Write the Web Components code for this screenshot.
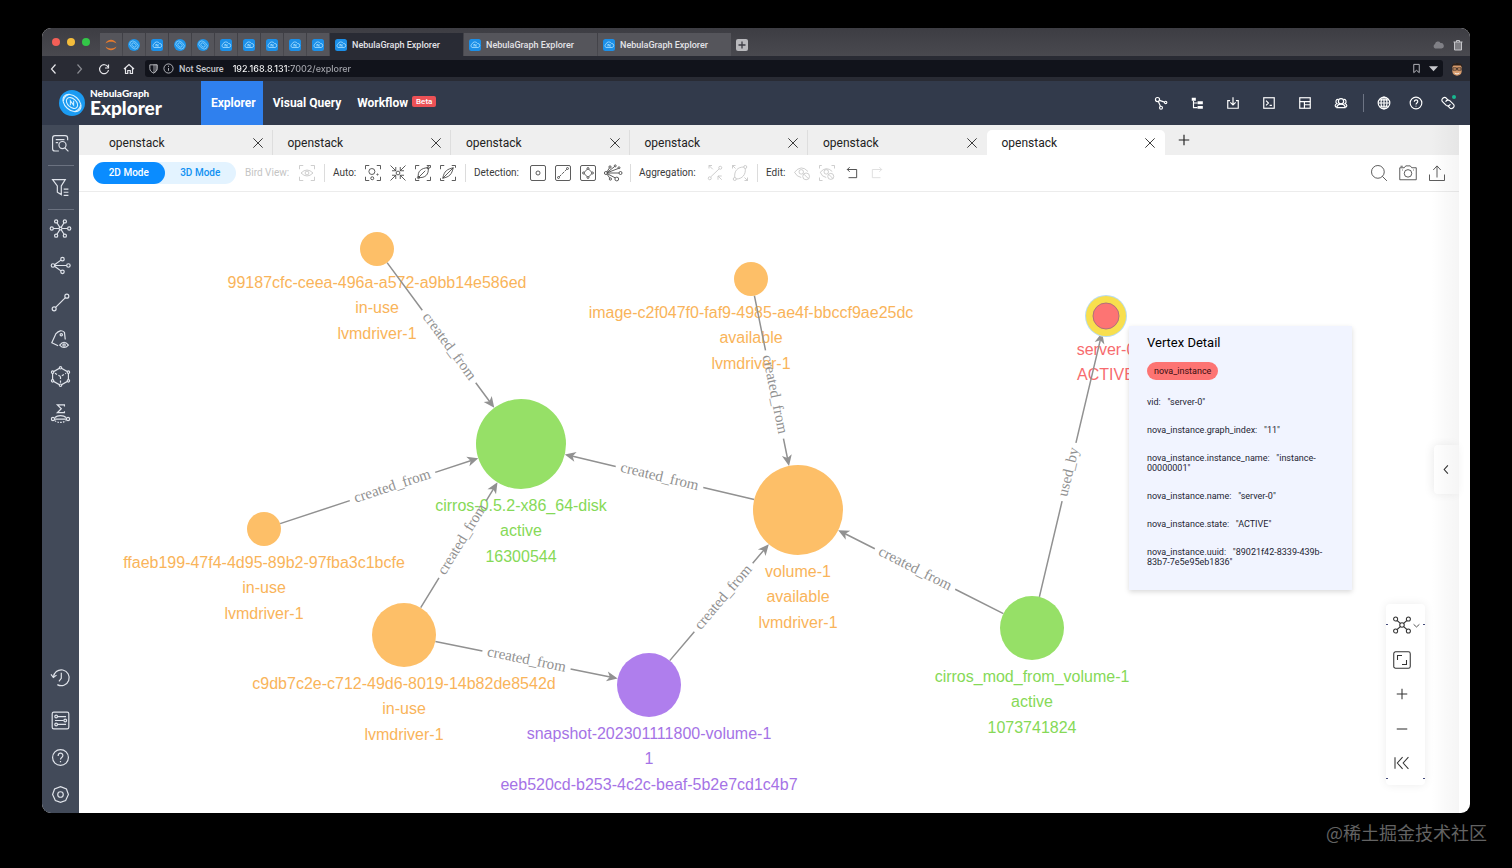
<!DOCTYPE html>
<html lang="en">
<head>
<meta charset="utf-8">
<title>NebulaGraph Explorer</title>
<style>
html { background: #000; }
body { margin: 0; min-height: 100vh; display: flex; flex-direction: column; background: #000; font-family: Roboto, "Liberation Sans", sans-serif; }
</style>
</head>
<body>
<app-window></app-window>
<page-credit>@稀土掘金技术社区</page-credit>

<script>
const ICONS = {
  close: '<path d="M4 4L20 20M20 4L4 20"/>',
  plus: '<path d="M12 3V21M3 12H21"/>',
  minus: '<path d="M3 12H21"/>',
  back: '<path d="M15 3L7 12L15 21"/>',
  forward: '<path d="M9 3L17 12L9 21"/>',
  reload: '<path d="M20 8A9 9 0 1 0 21 14"/><path d="M21 3V10H14" />',
  home: '<path d="M2 12L12 3L22 12M5 10V21H9.5V15H14.500V21H19V10"/>',
  shield: '<path d="M4 4H20V12C20 17 16 20 12 22C8 20 4 17 4 12Z"/><path d="M12 4H20V12C20 17 16 20 12 22Z" fill="currentColor" opacity=".4"/>',
  info: '<circle cx="12" cy="12" r="10"/><path d="M12 11V17M12 6V8.500"/>',
  bookmark: '<path d="M6 3H18V21L12 16L6 21Z"/>',
  caret: '<path d="M2 7H22L12 18Z" fill="currentColor" stroke="none"/>',
  cloud: '<path d="M6 19A5 5 0 0 1 6 10A6 6 0 0 1 17 8A5 5 0 0 1 19 19Z" fill="currentColor" stroke="none"/>',
  trash: '<path d="M3 6H21M9 6V3H15V6M5 6V22H19V6"/><path d="M6 7H18V21H6Z" fill="currentColor" opacity=".45"/>',
  addTab: '<rect x="0" y="0" width="24" height="24" rx="4" fill="#b9b9bd" stroke="none"/><path d="M12 5V19M5 12H19" stroke="#3c3c44"/>',
  jupyter: '<path d="M1 9C5 -1 19 -1 23 9C17 4 7 4 1 9ZM1 15C5 25 19 25 23 15C17 20 7 20 1 15Z" fill="#e27a2f" stroke="none"/>',
  favRound: '<circle cx="12" cy="12" r="12" fill="#1d94ea" stroke="none"/><g stroke="#a9e0ff" stroke-width="1.2"><ellipse cx="12" cy="12" rx="9.500" ry="6.500" transform="rotate(40 12 12)"/><ellipse cx="12" cy="12" rx="5" ry="3.500" transform="rotate(40 12 12)"/></g>',
  favSquare: '<rect width="24" height="24" rx="5" fill="#1b8fe8" stroke="none"/><g stroke="#a9e0ff"><path d="M6 17A4 4 0 0 1 6 10A6 6 0 0 1 17 9A4 4 0 0 1 18 17Z"/><path d="M10 15V10L14 15V10"/></g>',
  avatar: '<path d="M4 8C4 0 20 0 20 8V16C20 26 4 26 4 16Z" fill="#d69a6c" stroke="none"/><path d="M3 9C2 0 22 -1 21 9L18 6H6Z" fill="#2b211c" stroke="none"/><path d="M5 10H11V14H5ZM13 10H19V14H13ZM11 11H13" stroke="#2a2220" stroke-width="1.2"/><path d="M8 19Q12 22 16 19" stroke="#fff"/>',
  logo: '<circle cx="12" cy="12" r="12" fill="#1b9bf2" stroke="none"/><g stroke="#d8f1ff"><ellipse cx="12" cy="12" rx="9.500" ry="6.500" transform="rotate(42 12 12)"/><ellipse cx="12" cy="12" rx="6" ry="4" transform="rotate(42 12 12)"/><path d="M10.500 14V10L13.500 14V10M4 10A8 8 0 0 1 10 4M20 14A8 8 0 0 1 14 20"/></g>',
  navGraph: '<circle cx="6" cy="6" r="3.500"/><circle cx="20" cy="11" r="2"/><circle cx="12" cy="20" r="2.500"/><path d="M9.500 7.500L18 10.500M7.500 9.500L11 17.500"/>',
  navTree: '<path d="M3 3H10V8H3ZM13 9H22V14H13ZM13 17H22V22H13Z" fill="currentColor" stroke="none"/><path d="M6 8V20H13M6 12H13"/>',
  navImport: '<path d="M7 8H3V21H21V8H17M12 2V15M7.500 11L12 15.500L16.500 11"/>',
  navConsole: '<rect x="3" y="3" width="18" height="18"/><path d="M7 8L11 12L7 16M13 16H17"/>',
  navLayout: '<rect x="3" y="3" width="18" height="18"/><path d="M3 9.500H21M11 9.500V21M11 15H21"/>',
  navUsers: '<circle cx="12" cy="9" r="4.500"/><path d="M5 20C5 12 19 12 19 20ZM7.500 6C3 5 2 11 5 13C1 15 1 19 5 19M16.500 6C21 5 22 11 19 13C23 15 23 19 19 19"/>',
  globe: '<circle cx="12" cy="12" r="10"/><ellipse cx="12" cy="12" rx="5" ry="10"/><path d="M12 2V22M2 12H22M4 6.500H20M4 17.500H20"/>',
  help: '<circle cx="12" cy="12" r="10"/><path d="M9 10C9 5.500 15 5.500 15 9.500C15 12 12 12 12 14.500M12 16.500V18"/>',
  link: '<path d="M12 7L9 3.500C5.500 0 -1 6 2.500 9.500L9 16C11.500 18 15 17 16 14"/><path d="M12 17L15 20.500C18.500 24 25 18 21.500 14.500L15 8C12.500 6 9 7 8 10"/>',
  searchDoc: '<path d="M10 21.500H5Q2 21.500 2 18.500V5Q2 2 5 2H18Q21 2 21 5V8M6 7H17M6 11H9"/><circle cx="14.500" cy="14" r="4.500"/><path d="M17.500 17.500L22 22"/>',
  filter: '<path d="M2 2H18L13 10V21L8 18V10ZM16 14H22M16 18H22M16 22H22"/>',
  hub: '<circle cx="12" cy="12" r="1.800"/><circle cx="1" cy="12" r="2"/><circle cx="23" cy="12" r="2"/><circle cx="6.500" cy="3" r="2"/><circle cx="17.500" cy="3" r="2"/><circle cx="6.500" cy="21" r="2"/><circle cx="17.500" cy="21" r="2"/><path d="M3 12H10M14 12H21M7.500 4.800L11 10.300M16.500 4.800L13 10.300M7.500 19.200L11 13.700M16.500 19.200L13 13.700"/>',
  branch: '<circle cx="2.500" cy="12" r="2.200"/><circle cx="22" cy="12" r="2.200"/><circle cx="14.500" cy="4" r="2.200"/><circle cx="14.500" cy="20" r="2.200"/><path d="M4.700 12H19.800M4.500 11L12.500 5.200M4.500 13L12.500 18.800"/>',
  path: '<circle cx="4" cy="20" r="2.500"/><circle cx="20" cy="4" r="2.500"/><path d="M5.800 18.200L18.200 5.800"/>',
  tagEye: '<path d="M9 20L1 16L6 5Q12 -2 17 3L18 12"/><circle cx="13" cy="6" r="1.500"/><path d="M11 19Q16.500 12 22 19Q16.500 25 11 19Z"/><circle cx="16.500" cy="19" r="1.500"/>',
  cube: '<path d="M12 1L22 6.500V17.500L12 23L2 17.500V6.500Z"/><path d="M5 8L12 12L19 8M12 12V20" stroke-dasharray="3 2"/><g fill="#424a59"><circle cx="12" cy="1" r="1.500"/><circle cx="22" cy="6.500" r="1.500"/><circle cx="22" cy="17.500" r="1.500"/><circle cx="12" cy="23" r="1.500"/><circle cx="2" cy="17.500" r="1.500"/><circle cx="2" cy="6.500" r="1.500"/></g>',
  sigma: '<path d="M17 3V1H8L13 6L8 11H17V9"/><circle cx="2.500" cy="19" r="2"/><circle cx="21.500" cy="19" r="2"/><path d="M4.500 19H19.500M5 17C8 14 16 14 19 17"/><path d="M5 21C8 24 16 24 19 21" stroke-dasharray="2 1.500"/>',
  history: '<path d="M3 12A10 10 0 1 1 8 21"/><path d="M0 8L3 12L7 9M13 6V13L10 17"/>',
  list: '<rect x="1.500" y="1.500" width="21" height="21" rx="2"/><circle cx="6.500" cy="7" r="1.700"/><circle cx="18" cy="12" r="1.700"/><circle cx="6.500" cy="17" r="1.700"/><path d="M8.500 7H19M5 12H16M8.500 17H19"/>',
  gear: '<path d="M12 2L19.500 5L22 12L18.500 19.500L12 22L5.500 19.500L2 12L4.500 5Z"/><circle cx="12" cy="12" r="3.500"/>',
  eyeFrame: '<path d="M2 7V2H7M17 2H22V7M22 17V22H17M7 22H2V17M4 12Q12 4 20 12Q12 20 4 12Z"/><circle cx="12" cy="12" r="2.500"/>',
  autoCircles: '<path d="M2 7V2H7M17 2H22V7M22 17V22H17M7 22H2V17"/><circle cx="10.500" cy="10" r="4"/><circle cx="18" cy="14" r=".8"/><circle cx="11" cy="19" r="2"/>',
  converge: '<circle cx="12" cy="12" r="2.500"/><path d="M2 2L9 9M22 2L15 9M2 22L9 15M22 22L15 15M9 4V9H4M15 4V9H20M9 20V15H4M15 20V15H20"/>',
  leafA: '<path d="M2 7V2H7M17 2H22V5M22 17V22H17M2 19V22H7M6 18C4 10 10 5 19 5C20 14 15 19 6 18ZM6 18L15 9"/><circle cx="19" cy="5" r="1.500"/><circle cx="6" cy="18" r="1.500"/>',
  leafB: '<path d="M2 7V2H7M17 2H22V5M22 17V22H17M2 19V22H7M5 19C7 9 11 7 19 5C17 14 14 17 5 19ZM5 19L19 5"/>',
  boxDot: '<rect x="2" y="2" width="20" height="20" rx="2"/><circle cx="12" cy="12" r="2.700"/>',
  boxLine: '<rect x="2" y="2" width="20" height="20" rx="2"/><circle cx="6" cy="18" r="1.300"/><circle cx="18" cy="6" r="1.300"/><path d="M7 17L17 7" stroke-dasharray="4 1.500"/>',
  boxDiamond: '<rect x="2" y="2" width="20" height="20" rx="2"/><path d="M12 6L18 12L12 18L6 12Z"/><g fill="#fff"><circle cx="12" cy="6" r="1.300"/><circle cx="18" cy="12" r="1.300"/><circle cx="12" cy="18" r="1.300"/><circle cx="6" cy="12" r="1.300"/></g>',
  fan: '<circle cx="2.500" cy="12" r="2"/><circle cx="22" cy="12" r="2"/><circle cx="8" cy="4" r="1.500"/><circle cx="15" cy="2.500" r="1.300"/><circle cx="20" cy="5" r="1.300"/><circle cx="8.500" cy="20" r="1.500"/><circle cx="17" cy="20" r="2.500"/><path d="M4.500 12H20M4 10.500L7 5.500M4.500 11L14 3.500M4.500 11.500L19 6M4 13.500L7.500 18.500M4.500 13L15 18.500"/>',
  aggLine: '<circle cx="5" cy="19" r="2"/><circle cx="19" cy="5" r="2"/><path d="M6.500 17L17.500 6.500M4 2L9 7M4 6V2H8M16 16L21 21M16 21V16H21"/>',
  aggLeaf: '<circle cx="5" cy="20" r="2"/><circle cx="19" cy="4" r="2"/><path d="M5 18C4 9 9 4 17 4M19 6C20 14 15 20 7 20M2 2L6 6M2 6V2H6M18 18L22 22M22 18V22H18"/>',
  eyeOff: '<path d="M11 18Q5 17 2 11Q11 0 20 10"/><circle cx="11" cy="10.500" r="3"/><circle cx="17.500" cy="16.500" r="4.500"/><path d="M14.500 13.500L20.500 19.500"/>',
  eyeOffFrame: '<path d="M11 18Q5 17 3 11Q11 2 19 10M2 6V2H5M18 2H22V6M2 18V22H6"/><circle cx="11" cy="10.500" r="3"/><circle cx="17" cy="16.500" r="4"/><path d="M14.500 14L20 19.500"/>',
  undo: '<path d="M8 2L4 6L8 10M4 6H20V20H6"/>',
  redo: '<path d="M16 2L20 6L16 10M20 6H4V20H18"/>',
  search: '<circle cx="10.500" cy="10.500" r="8.500"/><path d="M16.500 16.500L22.500 22.500"/>',
  camera: '<path d="M1 5H7L9 2.500H15L17 5H23V21H1Z"/><circle cx="12" cy="12.500" r="5"/><path d="M4 8H5M19 8H20M2 3H5"/>',
  upload: '<path d="M2 14V22H22V14M12 18V3M7 8L12 2.500L17 8"/>',
  force: '<circle cx="12" cy="12" r="3"/><circle cx="3.500" cy="4" r="2.700"/><circle cx="20.500" cy="4" r="2.700"/><circle cx="3.500" cy="20" r="2.700"/><circle cx="20.500" cy="20" r="2.700"/><path d="M5.500 6L9.800 9.800M18.500 6L14.200 9.800M5.500 18L9.800 14.200M18.500 18L14.200 14.200"/>',
  fit: '<rect x="1" y="1" width="22" height="22" rx="2.500"/><path d="M6 12V6H12M18 12V18H12"/>',
  down: '<path d="M2 8L12 17L22 8"/>',
  rewind: '<path d="M0 2V22M13 2L4 12L13 22M23 2L14 12L23 22"/>'
};

function define(name, markup, setup) {
  customElements.define(name, class extends HTMLElement {
    constructor() {
      super();
      this.attachShadow({ mode: 'open' }).innerHTML = markup;
    }
    connectedCallback() { if (setup) setup.call(this, this.shadowRoot); }
  });
}

/* Shared look of bare icon buttons */
const BUTTON = 'button{appearance:none;border:0;padding:0;margin:0;background:none;color:inherit;font:inherit;display:flex;align-items:center;justify-content:center;cursor:pointer}';
const btn = (icon, label, attrs = '') => `<button aria-label="${label}" ${attrs}><ne-icon name="${icon}"></ne-icon></button>`;

define('ne-icon', `<style>:host{display:block;flex:none;width:var(--icon,18px);height:var(--icon,18px)}svg{display:block;width:100%;height:100%;overflow:visible;fill:none;stroke:currentColor;stroke-width:var(--stroke,1.4)}</style>`, function (root) {
  if (!root.querySelector('svg')) root.innerHTML += `<svg viewBox="0 0 24 24" aria-hidden="true">${ICONS[this.getAttribute('name')]}</svg>`;
});

define('page-credit', `<style>:host{display:flex;height:55px;flex:none;justify-content:flex-end;padding-right:25px;color:#636363;font:18px/38px "Noto Sans CJK SC",sans-serif;box-sizing:border-box}</style><slot></slot>`);

define('app-window', `<style>
:host{display:flex;flex-direction:column;flex:1;margin:28px 42px 0;border-radius:9px;overflow:hidden;background:#fff}
main{display:flex;flex:1}
section{flex:1;min-width:0;display:flex;flex-direction:column;padding-right:11px;position:relative}
.fade{position:absolute;top:0;bottom:0;right:11px;width:28px;background:linear-gradient(90deg,rgba(0,0,0,0),rgba(0,0,0,.04));pointer-events:none}
</style>
<tab-strip></tab-strip><address-bar></address-bar><app-nav></app-nav>
<main><side-bar></side-bar><section><space-tabs></space-tabs><tool-bar></tool-bar><graph-canvas></graph-canvas><div class="fade"></div></section></main>`);

define('tab-strip', `<style>
:host{display:flex;height:28px;background:linear-gradient(#3d3d43,#49494f);color:#e4e4e8;font:500 9px/12px Roboto,sans-serif;box-sizing:border-box;padding-left:10px}
${BUTTON}
.lights{display:flex;gap:7px;align-items:center;width:48px}
.lights i{width:8px;height:8px;border-radius:50%}
.tabs{display:flex;gap:1px;padding-top:5px}
.tabs button{width:22px;background:#55555b;--icon:12px;--stroke:1.6}
.tabs .wide{width:133px;justify-content:flex-start;gap:5px;padding-left:5px;box-sizing:border-box;white-space:nowrap}
.tabs .on{background:#292b34}
.add{margin-left:5px;width:12px;--icon:12px;--stroke:2.6;padding-top:5px}
.end{margin-left:auto;display:flex;gap:8px;align-items:center;padding:5px 6px 0 0;--icon:12px;--stroke:2;color:#c4c4c8}
.end > :first-child{color:#808086}
</style>
<div class="lights"><i style="background:#f35f57"></i><i style="background:#f4bd3c"></i><i style="background:#33c748"></i></div>
<div class="tabs">${['jupyter','favRound','favSquare','favRound','favRound','favSquare','favSquare','favSquare','favSquare','favSquare'].map((n, i) => btn(n, 'Pinned tab ' + (i + 1))).join('')}
${['on', '', ''].map(c => `<button class="wide ${c}"><ne-icon name="favSquare"></ne-icon>NebulaGraph Explorer</button>`).join('')}</div>
${btn('addTab', 'New tab', 'class="add"')}
<div class="end">${btn('cloud', 'Cloud tabs')}${btn('trash', 'Closed tabs')}</div>`);

define('address-bar', `<style>
:host{display:flex;height:25px;align-items:center;background:#292b34;color:#e6e6ea;padding:0 6px;box-sizing:border-box}
${BUTTON}
.nav{display:flex;gap:13px;--icon:12px;--stroke:2.4;margin-right:10px}
.nav > :nth-child(2){color:#8a8b92}
.field{flex:1;display:flex;align-items:center;height:17px;border-radius:3px;background:#11131b;--icon:11px;--stroke:1.9;padding:0 3px 0 3px;gap:4px;color:#c7c8cd}
label{font:500 9px/16px Roboto,sans-serif;margin:0 5px 0 1px;white-space:nowrap}
input{appearance:none;border:0;outline:0;padding:0;margin:0;flex:1;min-width:0;height:16px;font:500 9px/16px Inter,sans-serif;color:#fff;-webkit-text-fill-color:transparent;background:linear-gradient(90deg,#fff 59px,#a9aab1 59px);background-clip:text;-webkit-background-clip:text}
.field button{width:13px}
.user{--icon:14px;margin-left:7px}
</style>
<div class="nav">${btn('back', 'Back')}${btn('forward', 'Forward')}${btn('reload', 'Reload')}${btn('home', 'Home')}</div>
<div class="field"><ne-icon name="shield"></ne-icon><ne-icon name="info"></ne-icon><label for="url">Not Secure</label><input id="url" value="192.168.8.131:7002/explorer">${btn('bookmark', 'Bookmark')}${btn('caret', 'More')}</div>
${btn('avatar', 'Profile', 'class="user"')}`);

define('app-nav', `<style>
:host{display:flex;height:44px;background:#323a4b;color:#fff;padding:0 15px 0 17px;align-items:center;--icon:14px;--stroke:2}
${BUTTON}
.brand{display:flex;align-items:center;gap:5px;width:142px;color:#fff;text-decoration:none;font-family:Lato,sans-serif}
.brand ne-icon{--icon:26px;--stroke:1}
.brand span{display:flex;flex-direction:column}
.brand small{font:900 10px/9px Lato,sans-serif}
.brand b{font:900 19px/19px Lato,sans-serif}
nav{display:flex;height:44px;font:700 12px/44px Roboto,sans-serif}
nav a{color:#fff;text-decoration:none;padding:0 10px;white-space:nowrap}
nav a:nth-child(3){padding:0 4px 0 6px}
nav a.on{background:#2f80ee;padding-right:7px}
.beta{font:500 8px/11px Roboto,sans-serif;background:#ec5156;border-radius:2px;padding:0 4px;height:11px;margin-top:15px}
.tools{margin-left:auto;display:flex;align-items:center;gap:22px}
.more{display:flex;align-items:center;gap:18px;border-left:1px solid #6d7484;padding-left:13px;height:18px;margin-left:-7px}
.live{position:relative}
.live::after{content:"";position:absolute;top:-1px;right:-1px;width:4px;height:4px;border-radius:50%;background:#17b890}
</style>
<a class="brand" href="#home"><ne-icon name="logo"></ne-icon><span><small>NebulaGraph</small><b>Explorer</b></span></a>
<nav><a class="on" href="#explorer">Explorer</a><a href="#query">Visual Query</a><a href="#workflow">Workflow</a><span class="beta">Beta</span></nav>
<div class="tools">${btn('navGraph', 'Schema')}${btn('navTree', 'Structure')}${btn('navImport', 'Import')}${btn('navConsole', 'Console')}${btn('navLayout', 'Dashboard')}${btn('navUsers', 'Users')}
<div class="more">${btn('globe', 'Language')}${btn('help', 'Help')}${btn('link', 'Connection', 'class="live"')}</div></div>`);

define('side-bar', `<style>
:host{display:flex;flex-direction:column;align-items:center;width:37px;flex:none;background:#424a59;color:#dfe3ea;--icon:19px;--stroke:1.5;box-sizing:border-box;padding:9px 0}
${BUTTON}
hr{width:26px;border:0;height:1px;background:#6b7280;margin:0}
.a{display:flex;flex-direction:column;align-items:center;gap:12px;margin-bottom:9px}
.b,.c{display:flex;flex-direction:column;gap:18px}
.c{margin-top:auto}
.c > :first-child{margin-bottom:6px}
</style>
<div class="a">${btn('searchDoc', 'Search')}<hr>${btn('filter', 'Filter')}<hr></div>
<div class="b">${btn('hub', 'Expand')}${btn('branch', 'Neighbors')}${btn('path', 'Path')}${btn('tagEye', 'Tags')}${btn('cube', 'Graph')}${btn('sigma', 'Statistics')}</div>
<div class="c">${btn('history', 'History')}${btn('list', 'Snapshots')}${btn('help', 'Help')}${btn('gear', 'Settings')}</div>`);

define('space-tabs', `<style>
:host{display:flex;height:30px;background:#efefef;color:#222;font:12px/14px Roboto,sans-serif;padding-left:15px;box-sizing:border-box}
${BUTTON}
.tabs{display:flex;flex:0 1 1071px;padding-top:5px}
.tab{flex:1;display:flex;align-items:center;justify-content:space-between;padding:0 8px 0 15px;position:relative;--icon:14px;--stroke:1.5}
.tab + .tab:not(.on){box-shadow:-1px 0 #dedede}
.on{background:#fff;border-radius:5px 5px 0 0}
.add{--icon:14px;--stroke:2;margin-left:12px}
</style>
<div class="tabs">${[0, 1, 2, 3, 4, 5].map(i => `<div class="tab${i === 5 ? ' on' : ''}"><button>openstack</button>${btn('close', 'Close tab')}</div>`).join('')}</div>${btn('plus', 'Add tab', 'class="add"')}`);

define('tool-bar', `<style>
:host{display:flex;height:37px;align-items:center;padding:0 13px 0 14px;border-bottom:1px solid #ececec;box-sizing:border-box;font:500 10px/12px Roboto,sans-serif;color:#3a3a3a;--icon:18px;--stroke:1.1}
${BUTTON}
.mode{display:flex;width:143px;height:22px;border-radius:11px;background:#e3f3ff;margin-right:9px}
.mode button{flex:1;border-radius:11px;color:#1191f2}
.mode .on{background:#0a8cff;color:#fff}
.group{display:flex;align-items:center;gap:7px;padding-right:8px;white-space:nowrap;font-weight:400}
.group + .group{border-left:1px solid #dcdcdc;padding-left:8px;height:18px}
.off,button:disabled{color:#c4c4c4}
.auto{--label:24px}.detect{--label:48px}.agg{--label:60px}.edit{--label:20px}.bird{--label:46px}
.group span{width:var(--label)}
.history{--icon:14px;--stroke:1.5;width:18px}
.history:disabled{opacity:.6}
.end{display:flex;gap:11px;margin-left:auto}
</style>
<div class="mode"><button class="on" aria-pressed="true">2D Mode</button><button aria-pressed="false">3D Mode</button></div>
<div class="group bird"><span class="off">Bird View:</span>${btn('eyeFrame', 'Bird view', 'disabled')}</div>
<div class="group auto"><span>Auto:</span>${btn('autoCircles', 'Auto size')}${btn('converge', 'Converge')}${btn('leafA', 'Auto edges')}${btn('leafB', 'Auto paths')}</div>
<div class="group detect"><span>Detection:</span>${btn('boxDot', 'Isolated vertices')}${btn('boxLine', 'Edges')}${btn('boxDiamond', 'Loops')}${btn('fan', 'Fan out')}</div>
<div class="group agg"><span>Aggregation:</span>${btn('aggLine', 'Merge edges', 'disabled')}${btn('aggLeaf', 'Split edges', 'disabled')}</div>
<div class="group edit"><span>Edit:</span>${btn('eyeOff', 'Hide', 'disabled')}${btn('eyeOffFrame', 'Hide others', 'disabled')}${btn('undo', 'Undo', 'class="history"')}${btn('redo', 'Redo', 'class="history" disabled')}</div>
<div class="end">${btn('search', 'Search')}${btn('camera', 'Screenshot')}${btn('upload', 'Export')}</div>`);

const ORANGE = '#fdbf68', GREEN = '#96e067', PURPLE = '#af7eed', RED = '#fd7473';
const NODES = {
  a: { x: 298, y: 57, r: 17, fill: ORANGE, ink: '#f9b45a', lines: ['99187cfc-ceea-496a-a572-a9bb14e586ed', 'in-use', 'lvmdriver-1'] },
  b: { x: 672, y: 87, r: 17, fill: ORANGE, ink: '#f9b45a', lines: ['image-c2f047f0-faf9-4985-ae4f-bbccf9ae25dc', 'available', 'lvmdriver-1'] },
  c: { x: 442, y: 252, r: 45, fill: GREEN, ink: '#86d957', lines: ['cirros-0.5.2-x86_64-disk', 'active', '16300544'] },
  d: { x: 185, y: 337, r: 17, fill: ORANGE, ink: '#f9b45a', lines: ['ffaeb199-47f4-4d95-89b2-97fba3c1bcfe', 'in-use', 'lvmdriver-1'] },
  e: { x: 325, y: 443, r: 32, fill: ORANGE, ink: '#f9b45a', lines: ['c9db7c2e-c712-49d6-8019-14b82de8542d', 'in-use', 'lvmdriver-1'] },
  f: { x: 570, y: 493, r: 32, fill: PURPLE, ink: '#a573e6', lines: ['snapshot-202301111800-volume-1', '1', 'eeb520cd-b253-4c2c-beaf-5b2e7cd1c4b7'] },
  g: { x: 719, y: 318, r: 45, fill: ORANGE, ink: '#f9b45a', lines: ['volume-1', 'available', 'lvmdriver-1'] },
  h: { x: 953, y: 436, r: 32, fill: GREEN, ink: '#86d957', lines: ['cirros_mod_from_volume-1', 'active', '1073741824'] },
  i: { x: 1027, y: 124, r: 17, fill: RED, ink: '#f76b6e', lines: ['server-0', 'ACTIVE'], selected: true }
};
const EDGES = [['a', 'c'], ['b', 'g'], ['d', 'c'], ['e', 'c'], ['e', 'f'], ['f', 'g'], ['g', 'c'], ['h', 'g'], ['h', 'i', 'used_by']];

function edgeMarkup([from, to, label = 'created_from']) {
  const s = NODES[from], t = NODES[to];
  const dx = t.x - s.x, dy = t.y - s.y, len = Math.hypot(dx, dy);
  const deg = Math.atan2(dy, dx) * 180 / Math.PI, half = label === 'used_by' ? 30 : 45;
  const flip = Math.abs(deg) > 90 ? 180 : 0;
  return `<g transform="translate(${s.x} ${s.y}) rotate(${deg})"><path d="M${s.r} 0H${len / 2 - half}M${len / 2 + half} 0H${len - t.r - 5}"/><path class="tip" d="M${len - t.r} 0l-11 -5l3 5l-3 5z"/><text x="${len / 2}" y="4" transform="rotate(${flip} ${len / 2} 0)">${label}</text></g>`;
}
function nodeMarkup(n) {
  return n.selected
    ? `<circle cx="${n.x}" cy="${n.y}" r="21" fill="#b9dcf0"/><circle cx="${n.x}" cy="${n.y}" r="20" fill="#f8df4e"/><circle cx="${n.x}" cy="${n.y}" r="13" fill="${n.fill}" stroke="#b0707c"/>`
    : `<circle cx="${n.x}" cy="${n.y}" r="${n.r}" fill="${n.fill}"/>`;
}
function labelMarkup(n) {
  return n.lines.map((line, k) => `<text x="${n.x}" y="${n.y + n.r + 22 + [0, 25, 51][k]}" fill="${n.ink}">${line}</text>`).join('');
}

define('graph-canvas', `<style>
:host{display:block;flex:1;position:relative;min-height:620px}
svg{position:absolute;inset:0;width:100%;height:100%}
.names{font:16px "Liberation Sans",sans-serif;text-anchor:middle}
.edges path{stroke:#919191;stroke-width:1.5;fill:none}
.edges .tip{fill:#919191;stroke:none}
.edges text{font:15px "Liberation Serif",serif;fill:#919191;text-anchor:middle}
vertex-card{position:absolute;left:1050px;top:134px}
view-tools{position:absolute;right:34px;bottom:28px}
${BUTTON}
.open{position:absolute;right:0;top:253px;width:25px;height:49px;background:#fff;border-radius:4px 0 0 4px;box-shadow:-2px 0 10px rgba(0,0,0,.07);--icon:11px;--stroke:2.4;color:#333}
</style>
<svg><g class="names">${Object.values(NODES).map(labelMarkup).join('')}</g><g class="edges">${EDGES.map(edgeMarkup).join('')}</g>${Object.values(NODES).map(nodeMarkup).join('')}</svg>
<vertex-card></vertex-card>${btn('back', 'Open panel', 'class="open"')}<view-tools></view-tools>`);

define('vertex-card', `<style>
:host{display:block;width:223px;box-sizing:border-box;padding:9px 18px 23px;background:#f1f4ff;box-shadow:0 2px 5px rgba(0,0,0,.15);color:#1d2433;font:9px/10px Roboto,sans-serif}
h2{margin:0 0 11px;font:13px/16px Roboto,sans-serif;color:#000}
.tag{display:inline-block;background:#fd7473;border-radius:9px;padding:4px 7px;color:#3a0e10}
.props{margin-top:17px;display:flex;flex-direction:column;gap:18px}
p{margin:0}
</style>
<h2>Vertex Detail</h2><span class="tag">nova_instance</span>
<div class="props">${[['vid', 'server-0'], ['nova_instance.graph_index', '11'], ['nova_instance.instance_name', 'instance-00000001'], ['nova_instance.name', 'server-0'], ['nova_instance.state', 'ACTIVE'], ['nova_instance.uuid', '89021f42-8339-439b-83b7-7e5e95eb1836']].map(([k, v]) => `<p>${k}:&nbsp;&nbsp; "${v}"</p>`).join('')}</div>`);

define('view-tools', `<style>
:host{display:flex;flex-direction:column;align-items:center;justify-content:space-between;width:39px;height:181px;box-sizing:border-box;padding:12px 7px 13px 0;background:#fff;box-shadow:0 0 10px rgba(0,0,0,.08);border-radius:4px;--icon:18px;--stroke:1.4;color:#333}
${BUTTON}
button{position:relative}
.small{--icon:14px;--stroke:1.8;width:18px;height:18px}
.drop{position:absolute;left:20px;top:6px;--icon:7px;--stroke:2.8}
i{position:absolute;width:2px;height:1px;background:#444a7a}
</style>
<i style="left:0;top:20px"></i><i style="right:0;top:20px"></i><i style="left:0;bottom:6px"></i><i style="right:0;bottom:6px"></i>
<button aria-label="Layout"><ne-icon name="force"></ne-icon><ne-icon class="drop" name="down"></ne-icon></button>${btn('fit', 'Fit view')}${btn('plus', 'Zoom in', 'class="small"')}${btn('minus', 'Zoom out', 'class="small"')}${btn('rewind', 'Collapse', 'class="small"')}`);
</script>
</body>
</html>
